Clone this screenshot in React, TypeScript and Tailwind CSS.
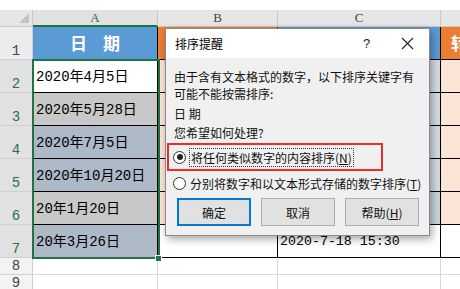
import React from "react";

const cellFont = { fontFamily: '"Liberation Mono", "Noto Sans CJK SC", monospace' };
const uiFont = { fontFamily: '"Noto Sans CJK SC", "Noto Sans", sans-serif' };
const hdrFont = { fontFamily: '"Liberation Serif", "Noto Sans CJK SC", serif' };

type RowDef = {
  num: string;
  h: string;
  sel: boolean;
  a: string;
  aBg: string;
  b: string;
  c: string;
  cText?: string;
  d: string;
  dark: boolean;
};

const rows: RowDef[] = [
  { num: "2", h: "h-[33px]", sel: true, a: "2020年4月5日", aBg: "bg-white", b: "bg-[#fce4d6]", c: "bg-[#d2dbe5]", d: "bg-[#fce4d6]", dark: true },
  { num: "3", h: "h-[33px]", sel: true, a: "2020年5月28日", aBg: "bg-[#c8c8c8]", b: "bg-[#fce4d6]", c: "bg-[#d2dbe5]", d: "bg-[#fce4d6]", dark: true },
  { num: "4", h: "h-[33px]", sel: true, a: "2020年7月5日", aBg: "bg-[#adb9c7]", b: "bg-[#fce4d6]", c: "bg-[#d2dbe5]", d: "bg-[#fce4d6]", dark: true },
  { num: "5", h: "h-[33px]", sel: true, a: "2020年10月20日", aBg: "bg-[#adb9c7]", b: "bg-[#fce4d6]", c: "bg-[#d2dbe5]", d: "bg-[#fce4d6]", dark: true },
  { num: "6", h: "h-[33px]", sel: true, a: "20年1月20日", aBg: "bg-[#c8c8c8]", b: "bg-[#fce4d6]", c: "bg-[#c8d3de]", d: "bg-[#fce4d6]", dark: true },
  { num: "7", h: "h-[33px]", sel: true, a: "20年3月26日", aBg: "bg-[#adb9c7]", b: "bg-white", c: "bg-white", cText: "2020-7-18 15:30", d: "bg-white", dark: true },
];

function RowHeader({ num, sel, h }: { num: string; sel: boolean; h: string }) {
  return (
    <div
      className={`w-[33px] ${h} shrink-0 flex items-end justify-center pb-[1px] border-r border-b border-[#d0d0d0] ${
        sel ? "bg-[#e1e1e1] text-[#217346]" : "bg-[#ececec] text-[#444]"
      } text-[14px] leading-none`}
      style={cellFont}
    >
      {num}
    </div>
  );
}

function Radio({ checked }: { checked: boolean }) {
  return (
    <div className="w-[13px] h-[13px] rounded-full border border-[#333] bg-white flex items-center justify-center shrink-0">
      {checked && <div className="w-[6px] h-[6px] rounded-full bg-[#222]" />}
    </div>
  );
}

function Btn({ children, def }: { children: React.ReactNode; def?: boolean }) {
  return (
    <div
      className={`w-[74px] h-[28px] flex items-center justify-center text-[12px] text-[#111] bg-[#e1e1e1] ${
        def ? "border-2 border-[#0078d7]" : "border border-[#adadad]"
      }`}
    >
      {children}
    </div>
  );
}

export default function App() {
  return (
    <div className="relative w-[460px] h-[289px] overflow-hidden bg-white">
      {/* top white strip */}
      <div className="h-[10px] bg-white" />
      {/* column headers */}
      <div className="flex h-[17px]" style={hdrFont}>
        <div className="w-[33px] shrink-0 bg-[#e6e6e6] border-r border-b border-[#c8c8c8] relative">
          <div className="absolute right-[3px] bottom-[3px] w-0 h-0 border-l-[10px] border-l-transparent border-b-[10px] border-b-[#c4c4c4]" />
        </div>
        <div className="w-[125px] shrink-0 bg-[#e1e1e1] border-r border-[#c8c8c8] border-b-2 border-b-[#217346] flex items-center justify-center text-[13px] text-[#217346]">
          A
        </div>
        <div className="w-[120px] shrink-0 bg-[#e6e6e6] border-r border-b border-[#c8c8c8] flex items-center justify-center text-[13px] text-[#444]">
          B
        </div>
        <div className="w-[163px] shrink-0 bg-[#e6e6e6] border-r border-b border-[#c8c8c8] flex items-center justify-center text-[13px] text-[#444]">
          C
        </div>
        <div className="flex-1 bg-[#e6e6e6] border-b border-[#c8c8c8]" />
      </div>

      {/* row 1 */}
      <div className="flex h-[33px]">
        <RowHeader num="1" sel={false} h="h-[33px]" />
        <div
          className="w-[125px] shrink-0 bg-[#5b9bd5] border-r border-b border-black flex items-center justify-center text-white font-bold text-[17px] tracking-[6px] pl-[6px]"
          style={uiFont}
        >
          日 期
        </div>
        <div className="w-[120px] shrink-0 bg-[#ed7d31] border-r border-b border-black" />
        <div className="w-[163px] shrink-0 bg-[#5b9bd5] border-r border-b border-black" />
        <div
          className="flex-1 bg-[#ed7d31] border-b border-black flex items-center pl-[10px] text-white font-bold text-[17px] overflow-hidden whitespace-nowrap"
          style={uiFont}
        >
          转换
        </div>
      </div>

      {rows.map((r) => (
        <div key={r.num} className={`flex ${r.h}`}>
          <RowHeader num={r.num} sel={r.sel} h={r.h} />
          <div
            className={`w-[125px] shrink-0 ${r.aBg} border-r border-b border-black flex items-center pl-[3px] pt-[2px] text-[14px] text-black whitespace-nowrap`}
            style={cellFont}
          >
            {r.a}
          </div>
          <div className={`w-[120px] shrink-0 ${r.b} border-r border-b border-black`} />
          <div
            className={`w-[163px] shrink-0 ${r.c} border-r border-b border-black flex items-center pl-[2px] pt-[2px] text-[13.3px] text-black whitespace-nowrap`}
            style={cellFont}
          >
            {r.cText}
          </div>
          <div className={`flex-1 ${r.d} border-b border-black`} />
        </div>
      ))}

      {/* rows 8, 9 */}
      {[
        { n: "8", h: "h-[17px]" },
        { n: "9", h: "h-[17px]" },
      ].map((r) => (
        <div key={r.n} className={`flex ${r.h}`}>
          <div
            className={`w-[33px] ${r.h} shrink-0 flex items-end justify-center bg-[#f3f3f3] text-[#444] border-r border-b border-[#d0d0d0] text-[14px] leading-none pb-[1px]`}
            style={cellFont}
          >
            {r.n}
          </div>
          <div className="w-[125px] shrink-0 border-r border-b border-[#d8d8d8]" />
          <div className="w-[120px] shrink-0 border-r border-b border-[#d8d8d8]" />
          <div className="w-[163px] shrink-0 border-r border-b border-[#d8d8d8]" />
          <div className="flex-1 border-b border-[#d8d8d8]" />
        </div>
      ))}

      {/* selection border */}
      <div className="absolute left-[32px] top-[59px] w-[128px] h-[200px] border-2 border-[#217346] pointer-events-none" />
      <div className="absolute left-[155px] top-[255px] w-[7px] h-[7px] bg-[#217346] border border-white" />

      {/* dialog */}
      <div
        className="absolute left-[165px] top-[28px] w-[265px] h-[208px] bg-[#f0f0f0] border border-[#8a8a8a] shadow-[2px_3px_8px_rgba(0,0,0,0.35)] flex flex-col"
        style={uiFont}
      >
        <div className="h-[29px] bg-white flex items-center pl-[9px] text-[12px] text-black shrink-0">
          <span className="flex-1">排序提醒</span>
          <span className="w-[12px] text-[13px] text-[#222] mr-[26px]" style={{ fontFamily: '"Liberation Sans", sans-serif' }}>?</span>
          <svg width="13" height="13" viewBox="0 0 13 13" className="mr-[15px]">
            <path d="M1 1 L12 12 M12 1 L1 12" stroke="#222" strokeWidth="1.1" />
          </svg>
        </div>
        <div className="flex flex-col px-[8px] pt-[10px] text-[12px] text-[#111] leading-[17px]">
          <div className="whitespace-nowrap">由于含有文本格式的数字，以下排序关键字有</div>
          <div>可能不能按需排序:</div>
          <div className="mt-[3px]">日 期</div>
          <div className="mt-[2px]">您希望如何处理?</div>
          <div className="mt-[2px] -ml-[7px] w-[216px] h-[28px] border-[2.5px] border-[#ee2b2b] flex items-center pl-[4px]">
            <Radio checked />
            <div className="ml-[3px] px-[1px] border border-dotted border-[#333] leading-[17px] whitespace-nowrap">
              将任何类似数字的内容排序(<span className="underline">N</span>)
            </div>
          </div>
          <div className="mt-[4px] flex items-center pl-[-1px] -ml-[1px] whitespace-nowrap">
            <Radio checked={false} />
            <span className="ml-[4px]">
              分别将数字和以文本形式存储的数字排序(<span className="underline">T</span>)
            </span>
          </div>
          <div className="mt-[6px] flex gap-[10px] pl-[3px]">
            <Btn def>确定</Btn>
            <Btn>取消</Btn>
            <Btn>
              帮助(<span className="underline">H</span>)
            </Btn>
          </div>
        </div>
      </div>
    </div>
  );
}
